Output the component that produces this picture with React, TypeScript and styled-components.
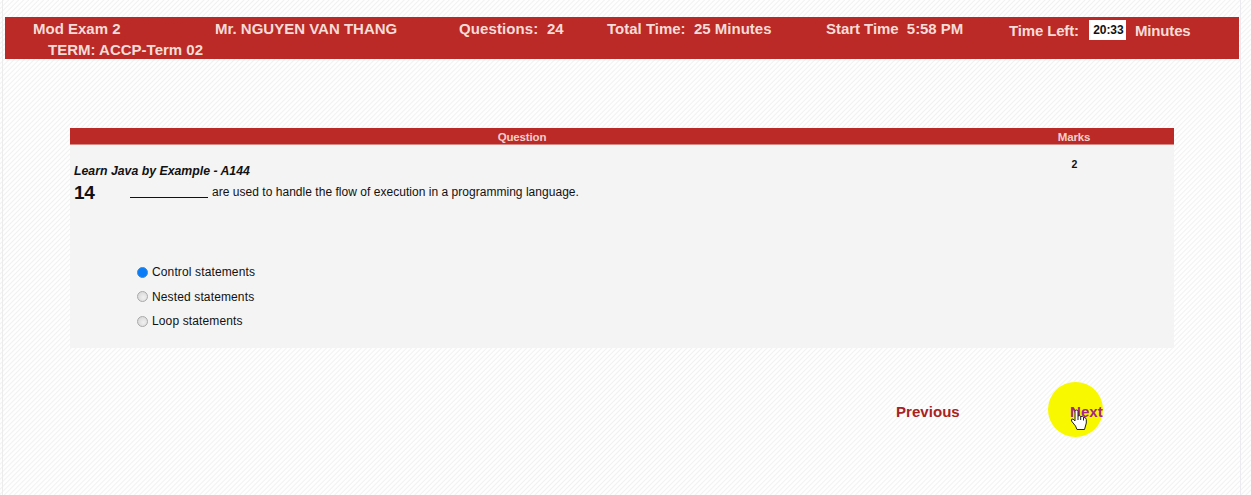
import React, { useState } from "react";
import styled, { createGlobalStyle } from "styled-components";

const GlobalStyle = createGlobalStyle`
  * { box-sizing: border-box; }
  body {
    margin: 0;
    overflow: hidden;
    font-family: "Liberation Sans", Arial, sans-serif;
    color: #111;
    background: repeating-linear-gradient(135deg, #fefefe 0 1.6px, #f1f1f1 2.6px, #fefefe 3.54px);
  }
`;

const Page = styled.div`
  width: 1239px;
  height: 495px;
  margin-left: 2px;
  padding: 17px 1px 0 2px;
  border-left: 1px solid #ececec;
  border-right: 1px solid #ececf0;
`;

const ExamBar = styled.header`
  height: 42px;
  background: #bb2a26;
  color: #f6dcd8;
  font-weight: bold;
  font-size: 15px;
  line-height: 20px;
  padding: 2px 0 0 28px;
`;

const InfoRow = styled.div`
  display: grid;
  grid-template-columns: 182px 244px 148px 219px 183px 1fr;
  height: 20px;
`;

const Info = styled.div<{ $spacing?: number }>`
  white-space: pre;
  letter-spacing: ${(p) => p.$spacing ?? 0}px;
`;

const Timer = styled(Info)`
  display: flex;
  align-items: center;
  height: 23px;
`;

const Clock = styled.span`
  width: 37px;
  height: 20px;
  margin: -2px 9px 0 10px;
  background: #fff;
  color: #111;
  font-size: 12px;
  letter-spacing: -0.1px;
  text-align: center;
  line-height: 21px;
  padding-left: 2px;
`;

const Term = styled.div`
  padding-left: 15px;
  line-height: 21px;
`;

const Sheet = styled.main`
  width: 1104px;
  margin: 69px 0 0 65px;
`;

const SheetHead = styled.div`
  display: grid;
  grid-template-columns: 904px 200px;
  height: 17px;
  background: #bb2a26;
  border-bottom: 1px solid #d88a87;
  color: #f3cfcc;
  font-size: 11.5px;
  font-weight: bold;
  line-height: 18px;
  letter-spacing: -0.15px;
  text-align: center;
`;

const SheetBody = styled.div`
  display: grid;
  grid-template-columns: 904px 200px;
  height: 203px;
  background: #f4f4f4;
`;

const Question = styled.section`
  padding: 17px 0 0 4px;
`;

const Source = styled.div`
  font-size: 12.3px;
  font-weight: bold;
  font-style: italic;
  line-height: 18px;
`;

const Prompt = styled.div`
  display: flex;
  height: 26px;
  line-height: 24px;
  font-size: 12px;
`;

const Number = styled.div`
  width: 56px;
  font-size: 19px;
  font-weight: bold;
  line-height: 25px;
  letter-spacing: -0.2px;
`;

const Sentence = styled.div`
  display: flex;
  letter-spacing: 0.03px;
`;

const Blank = styled.span`
  width: 78px;
  height: 18px;
  margin-right: 4px;
  border-bottom: 1px solid #111;
`;

const Marks = styled.div`
  padding: 12px 0 0 1px;
  font-size: 10.5px;
  font-weight: bold;
  line-height: 15px;
  text-align: center;
`;

const Options = styled.div`
  padding: 54px 0 0 63px;
`;

const Option = styled.label`
  display: flex;
  align-items: center;
  gap: 4px;
  height: 24.5px;
  font-size: 12px;
  letter-spacing: 0.13px;
`;

const Radio = styled.input`
  appearance: none;
  width: 11px;
  height: 11px;
  margin: 0;
  border: 1px solid #a9a9a9;
  border-radius: 50%;
  background: radial-gradient(circle at 60% 60%, #f0f0f0, #d2d2d2);
  &:checked {
    border-color: #2f8ef0;
    background: #0a7cf5;
  }
`;

const Pager = styled.nav`
  display: flex;
  align-items: center;
  width: 1104px;
  height: 54px;
  margin: 34px 0 0 65px;
  font-size: 15px;
  font-weight: bold;
  letter-spacing: 0.05px;
`;

const Previous = styled.a`
  width: 152px;
  margin-left: 826px;
  padding-top: 4px;
  color: #a82222;
`;

const Next = styled.a`
  position: relative;
  width: 55px;
  height: 55px;
  border-radius: 50%;
  background: #f8f800;
  color: #a32688;
  line-height: 59px;
  padding-left: 22px;
`;

const Hand = styled.svg`
  position: absolute;
  left: 22px;
  top: 27px;
`;

const choices = ["Control statements", "Nested statements", "Loop statements"];

export default function App() {
  const [answer, setAnswer] = useState(0);
  return (
    <>
      <GlobalStyle />
      <Page>
        <ExamBar>
          <InfoRow>
            <Info>Mod Exam 2</Info>
            <Info>Mr. NGUYEN VAN THANG</Info>
            <Info $spacing={0.1}>Questions:{"  "}24</Info>
            <Info>Total Time:{"  "}25 Minutes</Info>
            <Info $spacing={-0.05}>Start Time{"  "}5:58 PM</Info>
            <Timer $spacing={-0.15}>Time Left:<Clock>20:33</Clock>Minutes</Timer>
          </InfoRow>
          <Term>TERM: ACCP-Term 02</Term>
        </ExamBar>
        <Sheet>
          <SheetHead><span>Question</span><span>Marks</span></SheetHead>
          <SheetBody>
            <Question>
              <Source>Learn Java by Example - A144</Source>
              <Prompt>
                <Number>14</Number>
                <Sentence><Blank />are used to handle the flow of execution in a programming language.</Sentence>
              </Prompt>
              <Options>
                {choices.map((text, i) => (
                  <Option key={text}>
                    <Radio type="radio" name="answer" checked={answer === i} onChange={() => setAnswer(i)} />
                    {text}
                  </Option>
                ))}
              </Options>
            </Question>
            <Marks>2</Marks>
          </SheetBody>
        </Sheet>
        <Pager>
          <Previous>Previous</Previous>
          <Next>
            Next
            <Hand width="18" height="22" viewBox="0 0 18 22">
              <path d="M5 12V2.5Q5 1 6.5 1T8 2.5V7Q10 6 10.7 7.5 12.7 6.7 13.5 8.5 16 8 16.3 10.5V14L14.5 20.5H7L5.5 17 1.5 12Q1 9.5 3 10Z" fill="#fff" stroke="#222" strokeWidth="1" strokeLinejoin="round" />
              <path d="M8 7V11M10.7 7.5V11M13.5 8.5V11.5" fill="none" stroke="#222" strokeWidth="1" />
            </Hand>
          </Next>
        </Pager>
      </Page>
    </>
  );
}
